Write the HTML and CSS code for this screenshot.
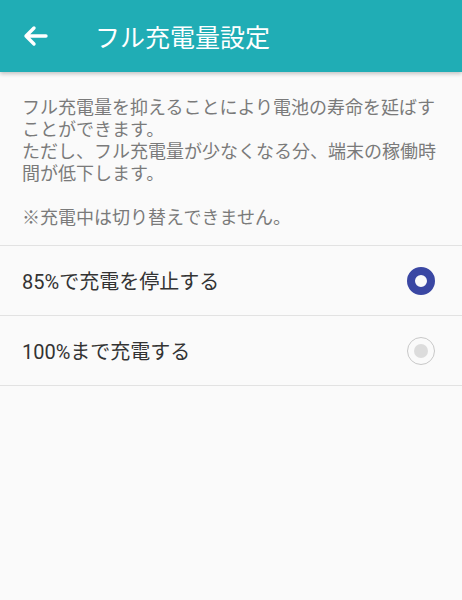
FILE: index.html
```html
<!DOCTYPE html>
<html lang="ja">
<head>
	<meta charset="UTF-8">
	<title>フル充電量設定</title>
	<link rel="stylesheet" href="styles.css">
</head>
<body>

<div class="bar">
	<svg class="back" width="26" height="22" viewBox="0 0 26 22">
		<path d="M3 11H23M11 3L3 11L11 19" fill="none" stroke="#fff" stroke-width="3.4" stroke-linecap="round" stroke-linejoin="round"/>
	</svg>
	<span class="title">フル充電量設定</span>
</div>

<p class="desc">フル充電量を抑えることにより電池の寿命を延ばすことができます。<br>ただし、フル充電量が少なくなる分、端末の稼働時間が低下します。<br><br>※充電中は切り替えできません。</p>

<ul class="list">
	<li class="row">
		<span>85%で充電を停止する</span>
		<i class="radio on"></i>
	</li>
	<li class="row">
		<span>100%まで充電する</span>
		<i class="radio"></i>
	</li>
</ul>

</body>
</html>
```

FILE: styles.css
```css
body{margin: 0;background: #fafafa;font-family: Roboto, "Noto Sans CJK JP", sans-serif;}
.bar{height: 72px;background: #20adb5;display: flex;align-items: center;box-shadow: 0 2px 4px rgba(0,0,0,.22);}
.back{margin-left: 23px;margin-right: 46px;}
.title{color: #fff;font-size: 25px;font-family: "Noto Sans CJK JP", sans-serif;}
.desc{margin: 0;padding: 23px 22px 18px;font-size: 18px;line-height: 22px;color: #7a7a7a;font-family: "Noto Sans CJK JP", sans-serif;}
.list{margin: 0;padding: 0;list-style: none;border-top: 1px solid #e2e2e2;}
.row{height: 69px;display: flex;align-items: center;justify-content: space-between;padding: 0 27px 0 22px;border-bottom: 1px solid #e2e2e2;font-size: 20px;color: #333;}
.radio{width: 28px;height: 28px;border-radius: 50%;box-sizing: border-box;border: 1.5px solid #c8c8c8;display: flex;align-items: center;justify-content: center;}
.radio:after{content: "";width: 14px;height: 14px;border-radius: 50%;background: #dcdcdc;}
.radio.on{border: 8px solid #3a47a3;}
.radio.on:after{display: none;}
```
